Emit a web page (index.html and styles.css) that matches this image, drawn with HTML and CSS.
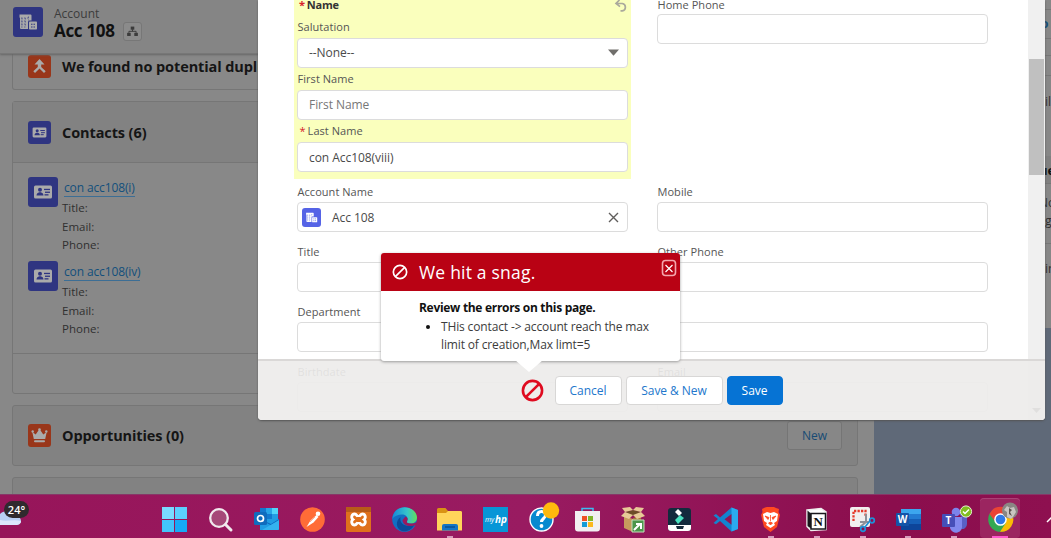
FILE: index.html
```html
<!DOCTYPE html>
<html lang="en">
<head>
<meta charset="utf-8">
<title>Acc 108 | Account</title>
<link rel="stylesheet" href="styles.css">
</head>
<body>
<svg class="defs" width="0" height="0">
  <symbol id="account" viewBox="0 0 30 30"><path d="M6.500 7.500h11a1 1 0 0 1 1 1v5h-2a1.500 1.500 0 0 0-1.500 1.500v7H8a1 1 0 0 1-1-1V11a1 1 0 0 1-.5-1z" fill="currentColor"/><rect x="16" y="14.500" width="8" height="8" rx=".8" fill="currentColor"/><path d="M9 11v9M12.300 11v9M15.500 9.500v4M8 11h9M8 14h6M8 17h6M8 20h6" stroke="var(--tile)" stroke-width=".6" stroke-dasharray="1.600 1.400"/><path d="M18 17.200h4.500M18 20h4.500" stroke="var(--tile)" stroke-width="1.100" stroke-dasharray="1.500 1"/></symbol>
  <symbol id="contact" viewBox="0 0 30 30"><rect x="6" y="8.500" width="18" height="13" rx="1.500" fill="currentColor"/><g fill="var(--tile)"><circle cx="12" cy="12.800" r="2"/><path d="M8.500 18.500c0-2 1.500-2.800 2.600-3.300h1.800c1.100.5 2.600 1.300 2.600 3.300z"/><rect x="16" y="11.800" width="6" height="1.300"/><rect x="17" y="14.600" width="5" height="1.300"/><rect x="16.500" y="17.200" width="4" height="1.300"/></g></symbol>
  <symbol id="ban" viewBox="0 0 24 24"><g fill="none" stroke="currentColor"><circle cx="12" cy="12" r="10"/><path d="M5 19 19 5"/></g></symbol>
</svg>
<div class="screen">
  <div class="app">
    <main class="record">
      <header class="record-head">
        <svg class="tile large"><use href="#account"/></svg>
        <div><p class="entity">Account</p>
          <div class="title-line"><h1>Acc 108</h1>
            <span class="hierarchy"><svg viewBox="0 0 19 19" width="17" height="17"><g fill="#3b3b3b"><rect x="7.500" y="4" width="4" height="3.500"/><rect x="3.500" y="11" width="4" height="3.500"/><rect x="11.500" y="11" width="4" height="3.500"/></g><path d="M9.500 7v2.300M5.500 11V9.300h8V11" fill="none" stroke="#3b3b3b" stroke-width="1.100"/></svg></span>
          </div>
        </div>
      </header>
      <section class="card duplicates">
        <svg class="tile orange" viewBox="0 0 23 23"><path d="m11.500 4 5 5.500h-3.300v2.500l4.500 4.300-1.700 1.700-4.500-4.400L7 18l-1.700-1.700L9.800 12V9.500H6.500z" fill="currentColor"/></svg>
        <h2>We found no potential duplicates of this Account.</h2>
      </section>
      <section class="card contacts">
        <div class="card-head"><svg class="tile"><use href="#contact"/></svg><h2>Contacts (6)</h2></div>
        <div class="people">
          <article class="person"><svg class="tile large deep"><use href="#contact"/></svg><div><a>con acc108(i)</a><p>Title:</p><p>Email:</p><p>Phone:</p></div></article>
          <article class="person"><svg class="tile large deep"><use href="#contact"/></svg><div><a>con acc108(iv)</a><p>Title:</p><p>Email:</p><p>Phone:</p></div></article>
        </div>
        <div class="card-foot"></div>
      </section>
      <section class="card card-head single">
        <svg class="tile orange" viewBox="0 0 23 23"><path d="m4.300 8 3.400 2.600L10.800 6h1.400l3.100 4.600L18.700 8l-1.500 7H5.800z" fill="currentColor"/><rect x="6" y="16.200" width="11" height="2" rx="1" fill="currentColor"/><g fill="currentColor"><circle cx="4.700" cy="7.500" r="1.200"/><circle cx="11.500" cy="5.500" r="1.300"/><circle cx="18.300" cy="7.500" r="1.200"/></g></svg>
        <h2>Opportunities (0)</h2><button class="new">New</button>
      </section>
      <section class="card card-head next"></section>
    </main>
    <aside class="side">
      <div class="s1"></div><div class="s2"><b>o</b></div><div class="s3"></div><div class="s4"></div>
      <div class="s5">il</div><div class="s6"><b>ue</b></div><div class="s7">No<br>g</div><div class="s8">in</div>
    </aside>
  </div>

  <div class="modal">
    <div class="form">
      <div class="column">
        <div class="name-group">
          <div class="legend"><span><i>*</i>Name</span><svg width="14" height="13" viewBox="0 0 14 13"><path d="M5.500 0 2 3.500l4 3.200M2.500 3.500h5.800a3.700 3.700 0 0 1 0 7.300H6.500" fill="none" stroke="#aaa99c" stroke-width="1.700"/></svg></div>
          <div class="field"><label>Salutation</label><div class="input dark">--None--<svg class="caret" width="11" height="7"><path d="M0 .5h11L5.500 6.800z" fill="#706e6b"/></svg></div></div>
          <div class="field"><label>First Name</label><div class="input hint">First Name</div></div>
          <div class="field"><label><i>*</i>Last Name</label><div class="input">con Acc108(viii)</div></div>
        </div>
        <div class="row"><label>Account Name</label><div class="input lookup"><svg class="tile bright"><use href="#account"/></svg>Acc 108<svg class="caret" width="11" height="11"><path d="m1 1 9 9m0-9-9 9" stroke="#605e5c" stroke-width="1.400"/></svg></div></div>
        <div class="row"><label>Title</label><div class="input"></div></div>
        <div class="row"><label>Department</label><div class="input"></div></div>
        <div class="row"><label>Birthdate</label><div class="input"></div></div>
      </div>
      <div class="column">
        <div class="home"><label>Home Phone</label><div class="input"></div></div>
        <div class="row"><label>Mobile</label><div class="input"></div></div>
        <div class="row"><label>Other Phone</label><div class="input"></div></div>
        <div class="row"><label>Fax</label><div class="input"></div></div>
        <div class="row"><label>Email</label><div class="input"></div></div>
      </div>
      <div class="scrollbar"><div class="thumb"></div><svg width="9" height="6"><path d="M0 0h9L4.500 5z" fill="#555"/></svg></div>
    </div>
    <footer class="actions">
      <svg class="error-icon"><use href="#ban"/></svg>
      <button>Cancel</button><button class="wide">Save &amp; New</button><button class="save">Save</button>
    </footer>
    <div class="popover">
      <div class="pop-head"><svg class="ban"><use href="#ban"/></svg><h3>We hit a snag.</h3>
        <svg class="close" width="16" height="18"><rect x="1.500" y="1.500" width="13" height="15" rx="3" fill="none" stroke="#f4a6ad" stroke-width="1.600"/><path d="m4.500 6 7 7m0-7-7 7" stroke="#fff" stroke-width="1.200"/></svg></div>
      <div class="pop-body"><strong>Review the errors on this page.</strong><ul><li>THis contact -&gt; account reach the max<br><span>limit of creation,Max limt=5</span></li></ul></div>
    </div>
  </div>

  <nav class="taskbar">
    <div class="weather"><svg width="34" height="34" viewBox="0 0 34 34"><path d="M0 15c4-4 10-4 13 2 5-1 8 2 8 5s-3 4-5 4H0z" fill="#b9cff5"/><path d="M0 21c7 2 13-1 21 1 0 3-3 4-5 4H0z" fill="#dce7fb"/></svg><span>24°</span></div>
    <div class="apps">
      <div><svg viewBox="0 0 25 25"><g fill="#43c4fb"><path d="M0 0h12v12H0z" fill="#79dcff"/><path d="M13 0h12v12H13z" fill="#5bd0ff"/><path d="M0 13h12v12H0z"/><path d="M13 13h12v12H13z" fill="#16aaf7"/></g></svg></div>
      <div><svg viewBox="0 0 25 25"><circle cx="11" cy="11" r="8.800" fill="#a64878" stroke="#f1e9ed" stroke-width="2.300"/><path d="m17.500 17.500 5.500 5.500" stroke="#f1e9ed" stroke-width="3" stroke-linecap="round"/></svg></div>
      <div><svg viewBox="0 0 25 25"><path d="M6 1h17a1 1 0 0 1 1 1v11H6z" fill="#1279cf"/><path d="M12 1h6v6h-6z" fill="#27a5e8"/><path d="M18 1h6v6h-6z" fill="#51d4fa"/><path d="M18 7h6v6h-6z" fill="#239ce4"/><path d="M6 12h19v10a1 1 0 0 1-1 1H6z" fill="#209de4"/><path d="M6 12 25 23V12l-8 5z" fill="#0d67bd"/><path d="m8 23 17-10v9a1 1 0 0 1-1 1z" fill="#34b3ef"/><rect y="5" width="13" height="13" rx="1.500" fill="#0f6cbd"/><circle cx="6.500" cy="11.500" r="3" fill="none" stroke="#fff" stroke-width="1.700"/></svg></div>
      <div><svg viewBox="0 0 25 25"><circle cx="12.500" cy="12.500" r="12.300" fill="#ff6c37"/><circle cx="18" cy="6.700" r="2.300" fill="#fff"/><path d="m16.500 8 2 2-5 5.500-7 4.500 4-6.500z" fill="#fff"/><path d="m10 15 5-5" stroke="#f2a184" stroke-width=".8"/></svg></div>
      <div><svg viewBox="0 0 25 25"><rect width="25" height="25" rx="1.500" fill="#df711c"/><path d="M0 0h25v5H0z" fill="#b75b18"/><path d="M8.500 7c2.500 0 2 2.500 4 2.500s1.500-2.500 4-2.500 4 3.500 1.500 5.500c2.500 2 1 5.500-1.500 5.500s-2-2.500-4-2.500-1.500 2.500-4 2.500-4-3.500-1.500-5.500C4.500 10.500 6 7 8.500 7z" fill="none" stroke="#fff" stroke-width="2.800"/><path d="M10.500 10v5h4v-5z" fill="#df711c"/></svg></div>
      <div><svg viewBox="0 0 25 25"><defs><linearGradient id="edge" x1="0" x2="1"><stop stop-color="#1688d8"/><stop offset=".6" stop-color="#36c5cb"/><stop offset="1" stop-color="#62e05b"/></linearGradient></defs><circle cx="12.500" cy="12.500" r="12.300" fill="#126fc3"/><path d="M.3 12C1 4 7 .2 12.500.2 20 .2 25 5.500 25 10.500c0 4-3 6-6.500 6-3 0-4.500-1.300-3.500-2.500 2-3-1-6.500-5-6.500-4 0-8 1.500-9.700 4.500z" fill="url(#edge)"/><path d="M8.500 10C7 17 14 21 22.500 18 19 24 13 25 10 24c-6-2-7-10-1.500-14z" fill="#0b4b99"/><path d="M13.500 9.500c4 2 1 4.500 1.500 6 2 1.500 6 1.500 10.500-.5l-2 3.300c-6 2-13 0-13-5.300z" fill="#991a5e"/></svg></div>
      <div class="open"><svg viewBox="0 0 25 25"><path d="M0 2.500A1.500 1.500 0 0 1 1.500 1h7L11 4h12.500A1.500 1.500 0 0 1 25 5.500V8H0z" fill="#d99314"/><path d="M0 6h9l2-2h12.500A1.500 1.500 0 0 1 25 5.500v18H0z" fill="#ffd45a"/><path d="M5 23.500V19a2 2 0 0 1 2-2h12a2 2 0 0 1 2 2v4.500z" fill="#1674c4"/><path d="M8 20h10" stroke="#0b4f91" stroke-width="1.500"/></svg></div>
      <div><svg viewBox="0 0 25 25"><path d="M0 0h25v25H0z" fill="#0796d7"/><text x="2" y="15" class="my">my</text><text x="12" y="16" class="hp">hp</text></svg></div>
      <div><svg viewBox="0 0 25 25"><circle cx="12.500" cy="12.500" r="11.500" fill="#0789cf" stroke="#fff" stroke-width="1.400"/><path d="M8.500 9c0-6 8-5.500 8-1 0 3.500-4 3.500-4 7" fill="none" stroke="#fff" stroke-width="3"/><circle cx="12.500" cy="19" r="1.900" fill="#fff"/><circle cx="22" cy="3.500" r="8.200" fill="#ffb90d"/></svg></div>
      <div><svg viewBox="0 0 25 25"><path d="M7 5V1.500h11V5" fill="none" stroke="#3cbcf0" stroke-width="1.500"/><path d="M0 4h25v17.500a3 3 0 0 1-3 3H3a3 3 0 0 1-3-3z" fill="#f2f0f1"/><path d="M7 9h5v5H7z" fill="#ee5124"/><path d="M13 9h5v5h-5z" fill="#81b72b"/><path d="M7 15h5v5H7z" fill="#159bd7"/><path d="M13 15h5v5h-5z" fill="#fcb91d"/></svg></div>
      <div><svg viewBox="0 0 25 25"><path d="m3 9 9 3 8-3v12l-8 4-9-4z" fill="#c79b5d"/><path d="m12 11 8-2v12l-8 4z" fill="#a67738"/><path d="m4 5 8-2 8 2-8 4z" fill="#6d4c27"/><path d="m4 5-4 4 8 3 4-4zm16 0 4 4-8 3-4-4zM4 5 1 1l8-1 3 3zm16 0 3-4-8-1-3 3z" fill="#e8ca97"/><path d="M11 13h12v12H11z" fill="#4b954b" stroke="#c6dfbc"/><path d="m13 23 6-6m-4 0h5v5" fill="none" stroke="#fff" stroke-width="2"/></svg></div>
      <div><svg viewBox="0 0 25 25"><rect x="1" y="1" width="23" height="23" rx="3" fill="#132b3d"/><path d="m8 5 3-3 4 4-3 3z" fill="#fff"/><path d="m8 13 5-5 4 3-6 6z" fill="#48e2bf"/><path d="M1 18h23v3a3 3 0 0 1-3 3H4a3 3 0 0 1-3-3z" fill="#fff"/><path d="M9 19h8l-1 3h-6z" fill="#162a3a"/></svg></div>
      <div><svg viewBox="0 0 25 25"><path d="M18.500.5 25 3v19l-6.500 2.500L7 14l-4 3.300L.5 16 5 12 .5 8.500 3 7l4 3.500z" fill="#1384cf"/><path d="M18.500.5 25 3v19l-6.500 2.500z" fill="#2baaf0"/><path d="m18.500 7-7 5.300 7 5.500z" fill="#901457"/></svg></div>
      <div class="open"><svg viewBox="0 0 25 25"><path d="m7 .5 2-.5h7l2 1 3 1-.5 3 1.500 3-3 12-6.500 5L6 20 3 8l1.500-3L4 2z" fill="#ff4a21"/><path d="m5 7 4-2 3.500 1L16 5l4 2-1 7-3 2 1 2-4.500 3L8 18l1-2-3-2z" fill="#fff"/><path d="m7 9 4 1.500-1 2zM18 9l-4 1.500 1 2zM12.500 8v6m-2 2 2-1 2 1-2 2z" fill="#ff4a21" stroke="#ff4a21" stroke-width=".8"/></svg></div>
      <div class="open"><svg viewBox="0 0 25 25"><path d="m3 3 14-1.500 5 3.500v17.500L7 23.500l-4-4z" fill="#fff" stroke="#eee" stroke-width="1.500"/><path d="m3.500 3.500 4 3.500v15l-4-3z" fill="#18171b"/><path d="M7 6.500h14.500V22H7z" fill="#fff" stroke="#18171b" stroke-width="1.500"/><text x="14.300" y="19" class="notion">N</text></svg></div>
      <div class="open"><svg viewBox="0 0 25 25"><rect width="20" height="20" rx="2" fill="#f1efef"/><path d="M3.500 14V4h12v5" fill="none" stroke="#e53a2b" stroke-width="2.300" stroke-dasharray="2.300 1.200"/><path d="M16 7v8l-6 5M10 15h9" fill="none" stroke="#8e9098" stroke-width="2"/><g fill="none" stroke="#1e91d8" stroke-width="1.700"><circle cx="13" cy="22" r="2.300"/><circle cx="22" cy="13.500" r="2.300"/><path d="m15 20 4-5"/></g></svg></div>
      <div class="open"><svg viewBox="0 0 25 25"><path d="M5 2h20v6H5z" fill="#3ca6ee"/><path d="M5 7h20v6H5z" fill="#237bd2"/><path d="M5 12h20v6H5z" fill="#155fb7"/><path d="M5 17h20v6H5z" fill="#0d459a"/><rect y="6" width="13" height="13" rx="1" fill="#1454a8"/><text x="6.500" y="16" class="letter">W</text></svg></div>
      <div class="open"><svg viewBox="0 0 25 25"><circle cx="14" cy="5" r="4.300" fill="#7c83eb"/><circle cx="21" cy="7" r="3" fill="#5960c5"/><path d="M17 10h8v7a5 5 0 0 1-6 5z" fill="#5960c5"/><path d="M8 10h12v8a6 6 0 0 1-12 3z" fill="#8188ee"/><rect y="7" width="13" height="13" rx="1" fill="#464eb8"/><text x="6.500" y="17" class="letter">T</text><circle cx="24" cy="4.500" r="5.600" fill="#82bd20" stroke="#e7f2d1"/><path d="m21 4.500 2 2 4-4" fill="none" stroke="#fff" stroke-width="1.500"/></svg></div>
      <div class="open active"><svg viewBox="0 0 25 25"><circle cx="12.500" cy="12.500" r="12.300" fill="#34a853"/><path d="M1.500 7A12.300 12.300 0 0 1 24 7H12.500l-5 8z" fill="#ea4335"/><path d="M24 7a12.300 12.300 0 0 1-12 17.800l6-9L16 7z" fill="#fbbc05"/><circle cx="12.500" cy="12.500" r="6.300" fill="#fff"/><circle cx="12.500" cy="12.500" r="4.800" fill="#3079e8"/><circle cx="22" cy="3.500" r="8" fill="#8a8683"/><path d="M19 10V5l-3-2 3-4 3 2 4-1 2 5-3 5-2 2z" fill="#c9c5c1"/><path d="m21 1 3 2-2 2 2 4-3-2z" fill="#5b504d"/></svg></div>
    </div>
    <svg class="chevron" width="12" height="8"><path d="m1 6 5-5 5 5" fill="none" stroke="#fff" stroke-width="1.500"/></svg>
  </nav>
</div>
</body>
</html>
```
FILE: styles.css
```css
* { box-sizing: border-box; }
body { margin: 0; font-family: "Open Sans", "Noto Sans", sans-serif; font-size: 12px; color: #2b2b2b; }
h1, h2, h3, p, ul { margin: 0; }
svg { overflow: visible; flex: none; }
.defs { position: absolute; }
.screen { position: relative; width: 1051px; height: 538px; overflow: hidden; display: flex; flex-direction: column; }
.app { height: 494px; display: flex; justify-content: space-between; background: #5f6978; overflow: hidden; }
.record { width: 874px; background: #888; }
.record-head { height: 54px; padding: 7px 0 0 12.500px; display: flex; gap: 11.500px; background: #858585; border-bottom: 1px solid #777; box-shadow: 0 1px 2px #666; position: relative; }
.entity { font-size: 12px; line-height: 14px; color: #3c3c3c; }
.title-line { display: flex; align-items: center; gap: 8px; margin-top: -1px; }
h1 { font-size: 17px; line-height: 22px; color: #111; letter-spacing: -.3px; }
.hierarchy { width: 19px; height: 19px; border: 1px solid #777; border-radius: 3px; background: #8b8b8b; display: flex; }
.tile { --tile: #2f3581; width: 23px; height: 23px; border-radius: 3px; background: var(--tile); color: #aaa; }
.tile.large { width: 30px; height: 30px; }
.tile.orange { --tile: #99361a; }
.card { margin: 0 16px 11px 12px; border: 1px solid #767676; border-radius: 3px; }
.duplicates { height: 36px; border-top: 0; border-radius: 0 0 3px 3px; padding: 1px 0 0 15px; display: flex; gap: 11px; }
h2 { font-size: 14.500px; line-height: 23px; color: #151515; white-space: nowrap; letter-spacing: -.1px; }
.card-head { display: flex; align-items: center; gap: 11px; height: 60px; padding-left: 15px; background: #828282; }
.contacts { height: 293px; }
.people { border-top: 1px solid #767676; height: 191px; padding: 14px 0 0 15px; }
.person { display: flex; gap: 4px; height: 84px; }
.person p { line-height: 18.500px; color: #303030; font-size: 11.500px; }
.person a { display: inline-block; font-size: 12px; line-height: 16px; margin: 3px 0 2px 2px; border-bottom: 1px solid #3c6e95; color: #124f7c; letter-spacing: -.13px; }
.person > div { margin-top: 0; }
.card-foot { border-top: 1px solid #767676; }
.single { height: 61px; padding-right: 15px; }
.next { height: 30px; }
.new { margin-left: auto; width: 55px; height: 29px; border: 1px solid #757575; border-radius: 3px; background: #878787; color: #174b74; font: 12px "Open Sans", sans-serif; }
.side { width: 6px; height: 328px; background: #878787; overflow: hidden; white-space: nowrap; font-size: 12px; color: #303030; }
.side div { border-bottom: 1px solid #777; text-indent: -4px; }
.s1 { height: 10px; }
.s2 { height: 29px; line-height: 28px; color: #164d78; }
.s3 { height: 17px; } .s4 { height: 20px; }
.side .s5 { height: 80px; padding-top: 17px; line-height: 17px; border: 0; text-indent: 0; }
.side .s6 { height: 28px; line-height: 28px; background: #808080; font-size: 13px; color: #111; text-indent: -6px; }
.side .s7 { height: 60px; line-height: 18px; padding-top: 10px; text-indent: -6px; }
.side .s8 { line-height: 50px; border: 0; text-indent: 0; }

.modal { position: absolute; left: 258px; top: 0; width: 787px; height: 420px; background: #fff; border-radius: 0 0 4px 4px; box-shadow: 0 1px 2px #555; }
.form { height: 420px; padding-left: 36px; display: flex; overflow: hidden; border-radius: inherit; }
.column { width: 337px; }
.column + .column { margin-left: 23px; }
.name-group { height: 179px; margin-bottom: 3px; padding: 0 3px; background: #faffbd; }
.legend { height: 18px; display: flex; justify-content: space-between; font-weight: 700; font-size: 11px; line-height: 10px; color: #333; letter-spacing: -.2px; }
i { color: #d6202a; font-style: normal; margin: 0 2px; }
.field { height: 52px; }
.field:nth-child(2) .input, .field:nth-child(3) .input { margin-top: -.500px; }
label { display: block; height: 20px; line-height: 19px; font-size: 11px; color: #555; padding-left: .500px; letter-spacing: .05px; }
.field label { line-height: 18px; }
.input { height: 30px; border: 1px solid #dcdcdc; border-radius: 4px; background: #fff; padding: 0 11px; display: flex; align-items: center; color: #4a4a4a; font-size: 12px; letter-spacing: -.05px; }
.hint { color: #777; }
.caret { margin-left: auto; margin-right: -3px; }
.row { height: 60px; padding: 0 3px; }
.lookup { padding-left: 4px; }
.tile.bright { --tile: #5563e6; width: 19px; height: 19px; color: #fff; margin-right: 11px; }
.home { height: 182px; padding: 0 3px; }
.home label { height: 14px; line-height: 9px; }
.scrollbar { margin-left: auto; width: 17px; background: #f0f0f0; padding: 59px 1px 6px; display: flex; flex-direction: column; align-items: center; justify-content: space-between; }
.thumb { width: 15px; height: 116px; background: #c0c0c0; }
.actions { position: absolute; left: 0; bottom: 0; width: 787px; height: 61px; background: rgba(237,235,234,.92); border-top: 2px solid #dad8d7; border-radius: 0 0 4px 4px; display: flex; align-items: center; padding-left: 262.500px; gap: 4px; }
.error-icon { width: 23px; height: 23px; color: #df0b20; stroke-width: 2.700; margin-right: 7px; }
.actions button { width: 67px; height: 29px; padding: 0; border: 1px solid #d8d7d6; border-radius: 4px; background: #fff; color: #2277cc; font: 12px "Open Sans", sans-serif; letter-spacing: -.05px; }
.actions .wide { width: 97px; }
.actions .save { width: 56px; color: #fff; background: #0673d4; border-color: #0673d4; }
.popover { position: absolute; left: 123px; top: 253px; width: 299px; height: 108px; background: #fff; border-radius: 3px; box-shadow: 0 1px 3px #999; }
.popover::after { content: ""; position: absolute; left: 134px; bottom: -11px; border: solid transparent; border-width: 12px 14px 0; border-top-color: #fff; }
.pop-head { height: 38px; background: #b90214; color: #fff; border-radius: 3px 3px 0 0; display: flex; align-items: center; padding: 0 3px 0 11px; }
.ban { width: 16px; height: 16px; stroke-width: 2.500; margin-right: 11px; }
h3 { font-size: 17.500px; font-weight: 400; letter-spacing: .2px; }
.close { margin: -8px 0 0 auto; }
.pop-body { padding: 8px 0 0 38px; font-size: 12px; line-height: 18.500px; color: #3c3c3c; white-space: nowrap; letter-spacing: -.14px; }
.pop-body strong { display: block; color: #111; letter-spacing: -.3px; }
ul { padding-left: 22px; }
li::marker { color: #111; }

.taskbar { height: 44px; background: linear-gradient(90deg, #97155a, #991b61 50%, #8b0e4d 85%, #8e1050); display: flex; box-shadow: inset 0 1px #873767; overflow: hidden; }
.weather { flex: none; width: 152px; position: relative; }
.weather span { position: absolute; left: 4px; top: 7px; width: 25px; height: 17px; border-radius: 9px; background: #302a2e; color: #fff; font: 600 11px/17px "Open Sans", sans-serif; text-align: center; }
.weather svg { margin-top: 5px; }
.apps { flex: none; display: grid; grid-template-columns: repeat(19, 45.850px); }
.apps > div { height: 44px; padding-top: 13px; display: flex; flex-direction: column; align-items: center; justify-content: space-between; }
.apps svg { width: 25px; height: 25px; }
.open::after { content: ""; width: 6px; height: 2px; background: #d69bbb; }
.apps .active { background: #9b2560; box-shadow: inset 0 1px #a94276; border-radius: 4px; margin: 4px 3px 0; height: 40px; padding-top: 9px; }
.active::after { width: 16px; background: #ff57ce; }
.my { font: italic 7px "Open Sans", sans-serif; fill: #fff; }
.hp { font: italic 700 10px "Open Sans", sans-serif; fill: #fff; }
.notion { font: 700 13px "Liberation Serif", serif; text-anchor: middle; fill: #111; }
.letter { font: 700 10px "Open Sans", sans-serif; text-anchor: middle; fill: #fff; }
.chevron { margin: 22px 0 0 23px; }
```
